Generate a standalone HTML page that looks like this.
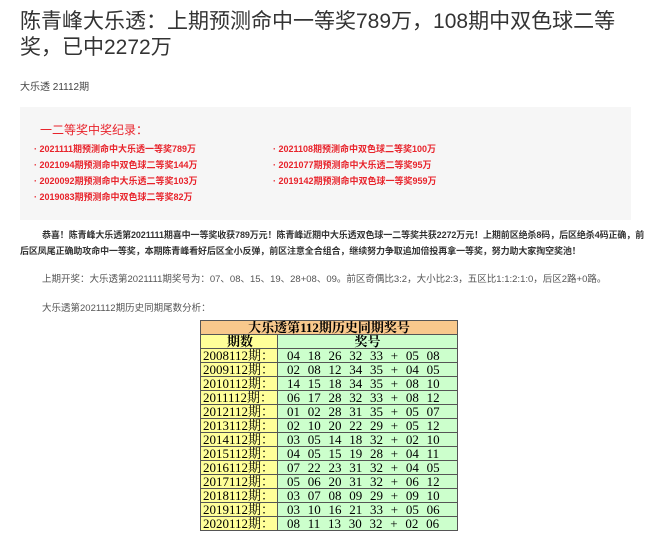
<!DOCTYPE html>
<html><head><meta charset="utf-8"><style>
*{margin:0;padding:0}
body{width:650px;height:537px;overflow:hidden;background:#fff;font-family:"Liberation Sans","Noto Sans CJK SC",sans-serif;color:#333;position:relative}
.a{position:absolute;white-space:nowrap}
h1{position:absolute;left:20px;top:9px;width:620px;font-size:21px;line-height:26px;font-weight:normal;color:#333}
.box{position:absolute;left:20px;top:107px;width:611px;height:113px;background:#f6f6f6}
.r{color:#e8232b;font-size:9px;font-weight:bold}
.p{font-size:9px;font-weight:bold;color:#333}
table{position:absolute;left:200px;top:320px;border-collapse:collapse;font-family:"Liberation Serif","Noto Serif CJK SC",serif;font-size:13px;color:#000}
td{border:1px solid #555;height:13px;line-height:13px;padding:0}
td.q{background:#ffff99;width:74px;padding-left:2px}
td.n{background:#ccffcc;width:170px;padding-left:9px;word-spacing:4.5px}
</style></head><body>
<h1>陈青峰大乐透：上期预测命中一等奖789万，108期中双色球二等奖，已中2272万</h1>
<div class="a" style="left:20px;top:78px;font-size:10px;color:#444">大乐透 21112期</div>
<div class="box"></div>
<div class="a" style="left:40px;top:121px;font-size:12px;color:#e8232b">一二等奖中奖纪录：</div>
<div class="a r" style="left:34px;top:142px">· 2021111期预测命中大乐透一等奖789万</div>
<div class="a r" style="left:34px;top:158px">· 2021094期预测命中双色球二等奖144万</div>
<div class="a r" style="left:34px;top:174px">· 2020092期预测命中大乐透二等奖103万</div>
<div class="a r" style="left:34px;top:190px">· 2019083期预测命中双色球二等奖82万</div>
<div class="a r" style="left:273px;top:142px">· 2021108期预测命中双色球二等奖100万</div>
<div class="a r" style="left:273px;top:158px">· 2021077期预测命中大乐透二等奖95万</div>
<div class="a r" style="left:273px;top:174px">· 2019142期预测命中双色球一等奖959万</div>
<div class="a p" style="left:42px;top:228px;letter-spacing:-0.1px">恭喜！陈青峰大乐透第2021111期喜中一等奖收获789万元！陈青峰近期中大乐透双色球一二等奖共获2272万元！上期前区绝杀8码，后区绝杀4码正确，前</div>
<div class="a p" style="left:20px;top:244px;letter-spacing:-0.1px">后区凤尾正确助攻命中一等奖，本期陈青峰看好后区全小反弹，前区注意全合组合，继续努力争取追加倍投再拿一等奖，努力助大家掏空奖池！</div>
<div class="a" style="left:42px;top:271px;font-size:9.5px;color:#555">上期开奖：大乐透第2021111期奖号为：07、08、15、19、28+08、09。前区奇偶比3:2，大小比2:3，五区比1:1:2:1:0，后区2路+0路。</div>
<div class="a" style="left:42px;top:300px;font-size:9.5px;color:#555">大乐透第2021112期历史同期尾数分析：</div>
<table>
<tr><td colspan="2" style="background:#f8c88c;text-align:center;font-weight:bold">大乐透第112期历史同期奖号</td></tr>
<tr><td class="q" style="text-align:center;font-weight:bold">期数</td><td class="n" style="text-align:center;font-weight:bold;padding:0">奖号</td></tr>
<tr><td class="q">2008112期：</td><td class="n">04 18 26 32 33 + 05 08</td></tr>
<tr><td class="q">2009112期：</td><td class="n">02 08 12 34 35 + 04 05</td></tr>
<tr><td class="q">2010112期：</td><td class="n">14 15 18 34 35 + 08 10</td></tr>
<tr><td class="q">2011112期：</td><td class="n">06 17 28 32 33 + 08 12</td></tr>
<tr><td class="q">2012112期：</td><td class="n">01 02 28 31 35 + 05 07</td></tr>
<tr><td class="q">2013112期：</td><td class="n">02 10 20 22 29 + 05 12</td></tr>
<tr><td class="q">2014112期：</td><td class="n">03 05 14 18 32 + 02 10</td></tr>
<tr><td class="q">2015112期：</td><td class="n">04 05 15 19 28 + 04 11</td></tr>
<tr><td class="q">2016112期：</td><td class="n">07 22 23 31 32 + 04 05</td></tr>
<tr><td class="q">2017112期：</td><td class="n">05 06 20 31 32 + 06 12</td></tr>
<tr><td class="q">2018112期：</td><td class="n">03 07 08 09 29 + 09 10</td></tr>
<tr><td class="q">2019112期：</td><td class="n">03 10 16 21 33 + 05 06</td></tr>
<tr><td class="q">2020112期：</td><td class="n">08 11 13 30 32 + 02 06</td></tr>
</table>
</body></html>
